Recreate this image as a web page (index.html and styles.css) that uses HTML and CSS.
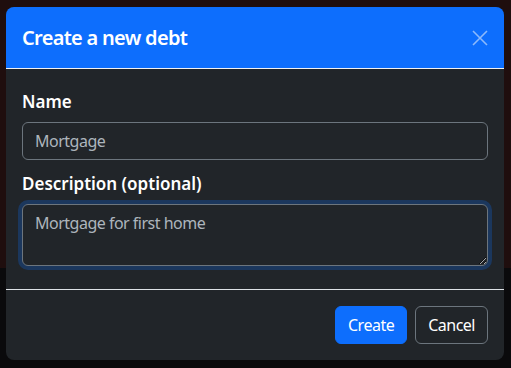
FILE: index.html
```html
<!DOCTYPE html>
<html>
<head>
<meta charset="utf-8">
<link rel="stylesheet" href="styles.css">
</head>
<body>
<div class="page">
  <div class="modal">
    <div class="modal-header">
      <h5 class="modal-title">Create a new debt</h5>
      <button class="btn-close" aria-label="Close">
        <svg width="16" height="16" viewBox="0 0 16 16"><path d="M1 1L15 15M15 1L1 15" stroke="currentColor" stroke-width="1.6" fill="none"/></svg>
      </button>
    </div>
    <div class="modal-body">
      <div class="field">
        <label class="form-label">Name</label>
        <input class="form-control" type="text" value="Mortgage">
      </div>
      <div class="field">
        <label class="form-label">Description (optional)</label>
        <textarea class="form-control textarea focused" rows="2">Mortgage for first home</textarea>
      </div>
    </div>
    <div class="modal-footer">
      <button class="btn btn-primary">Create</button>
      <button class="btn btn-secondary">Cancel</button>
    </div>
  </div>
</div>
</body>
</html>
```
FILE: styles.css
```css
* { box-sizing: border-box; }
html, body { margin: 0; height: 100%; }
body {
  background: linear-gradient(to bottom, #1f0e0e 0, #1f0e0e 268px, #0a0a0c 268px, #0a0a0c 100%);
  font-family: "Noto Sans", "Segoe UI", sans-serif;
  color: #dee2e6;
}
.page {
  padding: 7px 0 0 6px;
}
.modal {
  width: 498px;
  background: #212529;
  border-radius: 8px;
  overflow: hidden;
}
.modal-header {
  background: #0d6efd;
  height: 62px;
  padding: 0 16px;
  display: flex;
  align-items: center;
  justify-content: space-between;
  border-bottom: 1px solid #f0f2f4;
}
.modal-title {
  margin: 0;
  font-size: 20px;
  font-weight: 600;
  line-height: 30px;
  letter-spacing: -0.7px;
  color: #fff;
}
.btn-close {
  background: none;
  border: 0;
  padding: 0;
  width: 16px;
  height: 16px;
  color: #8cb9fb;
  display: flex;
}
.modal-body {
  padding: 21px 16px 23px;
  display: flex;
  flex-direction: column;
  gap: 12px;
}
.field {
  display: flex;
  flex-direction: column;
}
.form-label {
  font-size: 17px;
  font-weight: 600;
  line-height: 24px;
  color: #fff;
  margin-bottom: 8px;
}
.form-control {
  display: block;
  width: 100%;
  height: 38px;
  padding: 6px 12px;
  font-family: inherit;
  font-size: 16px;
  line-height: 24px;
  letter-spacing: -0.5px;
  color: #adb5bd;
  background: #212529;
  border: 1px solid #6c757d;
  border-radius: 6px;
  outline: none;
}
.textarea {
  height: 62px;
  resize: vertical;
}
.focused {
  box-shadow: 0 0 0 4px rgba(13, 110, 253, 0.25);
}
.modal-footer {
  border-top: 1px solid #dee2e6;
  padding: 16px;
  display: flex;
  justify-content: flex-end;
  gap: 8px;
}
.btn {
  height: 38px;
  padding: 6px 12px;
  font-family: inherit;
  font-size: 16px;
  line-height: 24px;
  letter-spacing: -0.5px;
  border-radius: 6px;
  border: 1px solid transparent;
}
.btn-primary {
  background: #0d6efd;
  border-color: #0d6efd;
  color: #fff;
}
.btn-secondary {
  background: #212529;
  border-color: #6c757d;
  color: #fff;
}
```
